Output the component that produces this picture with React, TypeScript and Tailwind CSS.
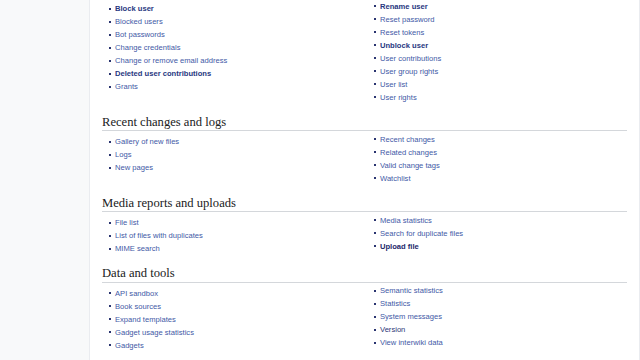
import React from "react";

type Item = { t: string; b?: boolean; c?: string };
type Section = { title?: string; left: Item[]; right: Item[] };

const sections: Section[] = [
  {
    left: [
      { t: "Block user", b: true },
      { t: "Blocked users" },
      { t: "Bot passwords" },
      { t: "Change credentials" },
      { t: "Change or remove email address" },
      { t: "Deleted user contributions", b: true },
      { t: "Grants" },
    ],
    right: [
      { t: "Rename user", b: true },
      { t: "Reset password" },
      { t: "Reset tokens" },
      { t: "Unblock user", b: true },
      { t: "User contributions" },
      { t: "User group rights" },
      { t: "User list" },
      { t: "User rights" },
    ],
  },
  {
    title: "Recent changes and logs",
    left: [{ t: "Gallery of new files" }, { t: "Logs" }, { t: "New pages" }],
    right: [
      { t: "Recent changes" },
      { t: "Related changes" },
      { t: "Valid change tags" },
      { t: "Watchlist" },
    ],
  },
  {
    title: "Media reports and uploads",
    left: [
      { t: "File list" },
      { t: "List of files with duplicates" },
      { t: "MIME search" },
    ],
    right: [
      { t: "Media statistics" },
      { t: "Search for duplicate files" },
      { t: "Upload file", b: true, c: "dark" },
    ],
  },
  {
    title: "Data and tools",
    left: [
      { t: "API sandbox" },
      { t: "Book sources" },
      { t: "Expand templates" },
      { t: "Gadget usage statistics" },
      { t: "Gadgets" },
    ],
    right: [
      { t: "Semantic statistics" },
      { t: "Statistics" },
      { t: "System messages" },
      { t: "Version", c: "visited" },
      { t: "View interwiki data" },
    ],
  },
];

function Li({ item }: { item: Item }) {
  let cls = "text-[#4259a6]";
  if (item.b) cls = "font-bold text-[#28387f]";
  if (item.c === "dark") cls = "font-bold text-[#23286a]";
  if (item.c === "visited") cls = "text-[#2c3778]";
  return (
    <li className="flex items-center h-[13px] leading-[13px]">
      <span className="w-[2px] h-[2px] bg-[#2a3470] mr-[4px] shrink-0" />
      <span className={cls + " whitespace-nowrap"}>{item.t}</span>
    </li>
  );
}

export default function App() {
  return (
    <div
      className="flex w-[640px] h-[360px] overflow-hidden bg-[#f8f9fa]"
      style={{ fontFamily: '"Liberation Sans", Arial, sans-serif' }}
    >
      <div className="w-[89px] shrink-0" />
      <div className="flex-1 bg-white border-l border-r border-[#eaecf0] pl-[12px] pr-[12px] text-[7.6px]">
        {sections.map((s, i) => (
          <div key={i}>
            {s.title && (
              <h2
                className="mt-[11px] text-[12.6px] leading-[15.5px] text-[#202122] border-b border-[#d4d7db]"
                style={{ fontFamily: '"Liberation Serif", "Times New Roman", serif' }}
              >
                {s.title}
              </h2>
            )}
            <div
              className={
                "grid grid-cols-[265px_1fr] " + (i === 0 ? "-mt-[0.5px]" : "mt-[1.5px]")
              }
            >
              <ul className="pl-[7px] pt-[2.5px]">
                {s.left.map((it) => (
                  <Li key={it.t} item={it} />
                ))}
              </ul>
              <ul className="pl-[7px]">
                {s.right.map((it) => (
                  <Li key={it.t} item={it} />
                ))}
              </ul>
            </div>
          </div>
        ))}
      </div>
    </div>
  );
}
